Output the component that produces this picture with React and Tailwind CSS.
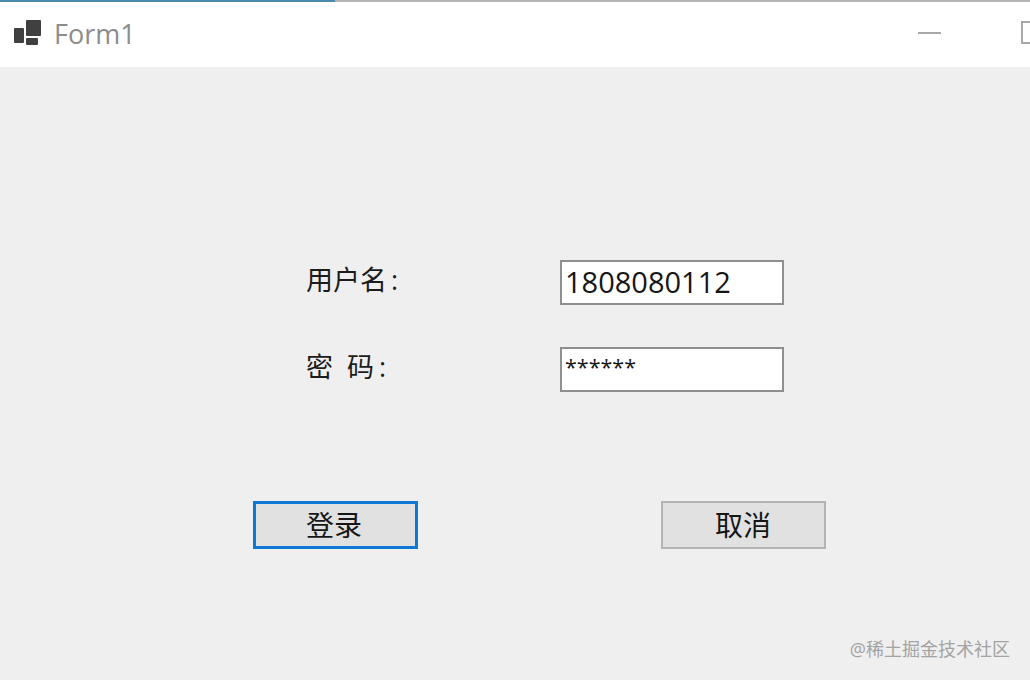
const FONT = "font-['Open_Sans','Noto_Sans_CJK_SC',sans-serif]";

const FormIcon = () => (
    <svg width="28" height="26" viewBox="0 0 28 26" fill="#404040">
        <rect x="12" y="0" width="15" height="16" rx="1" />
        <rect x="0" y="8" width="10" height="15" rx="1" />
        <rect x="12" y="18" width="12" height="7" rx="1" />
    </svg>
);

const TitleBar = () => (
    <div className="h-[67px] shrink-0 bg-white flex flex-col">
        {/* load progress line */}
        <div className="h-[2px] bg-[#b5b5b5]">
            <div className="h-full w-[335px] bg-[#4a8bb0]" />
        </div>
        <div className="flex-1 flex items-center pl-[14px] pb-[4px]">
            <FormIcon />
            <span className="ml-[12px] pt-[2px] text-[27px] leading-none text-[#8c8c8c]">Form1</span>
            <div className="ml-auto flex items-center">
                <div className="w-[23px] h-[2px] bg-[#a8a8a8]" />
                <div className="ml-[80px] mr-[-11px] w-[20px] h-[23px] border-2 border-[#a8a8a8]" />
            </div>
        </div>
    </div>
);

const FieldRow = ({ label, colonGap, children, className }) => (
    <div className={`flex items-start pl-[306px] ${className}`}>
        <div className="w-[254px] pt-[2px] text-[27px] leading-[36px] text-[#1c1c1c] whitespace-pre flex">
            <span>{label}</span>
            <span className={colonGap}>:</span>
        </div>
        <div className="w-[224px] h-[45px] bg-white border-2 border-[#8f8f8f] pl-[3px] text-[#161616] overflow-hidden">
            {children}
        </div>
    </div>
);

const FormButton = ({ children, className }) => (
    <button className={`w-[165px] h-[48px] bg-[#e1e1e1] text-[28px] leading-none text-[#161616] ${className}`}>
        {children}
    </button>
);

export default function App() {
    return (
        <div className={`relative w-[1030px] h-[680px] overflow-hidden bg-[#efefef] flex flex-col ${FONT}`}>
            <TitleBar />
            <div className="pt-[193px]">
                <FieldRow label="用户名" colonGap="ml-[4px]">
                    <span className="block text-[29px] leading-[40px]">1808080112</span>
                </FieldRow>
                <FieldRow label="密  码" colonGap="ml-[5px]" className="mt-[42px]">
                    <span className="block pt-[3px] text-[21.5px] leading-[30px]">******</span>
                </FieldRow>
                <div className="flex pl-[253px] mt-[109px] gap-[243px]">
                    <FormButton className="border-[3px] border-[#0f78d4] pr-[3px]">登录</FormButton>
                    <FormButton className="border-2 border-[#b4b4b4] pr-[1px]">取消</FormButton>
                </div>
            </div>
            {/* watermark */}
            <span className="absolute right-[20px] bottom-[19px] text-[18px] leading-[24px] text-[#a3a3a3]">@稀土掘金技术社区</span>
        </div>
    );
}
